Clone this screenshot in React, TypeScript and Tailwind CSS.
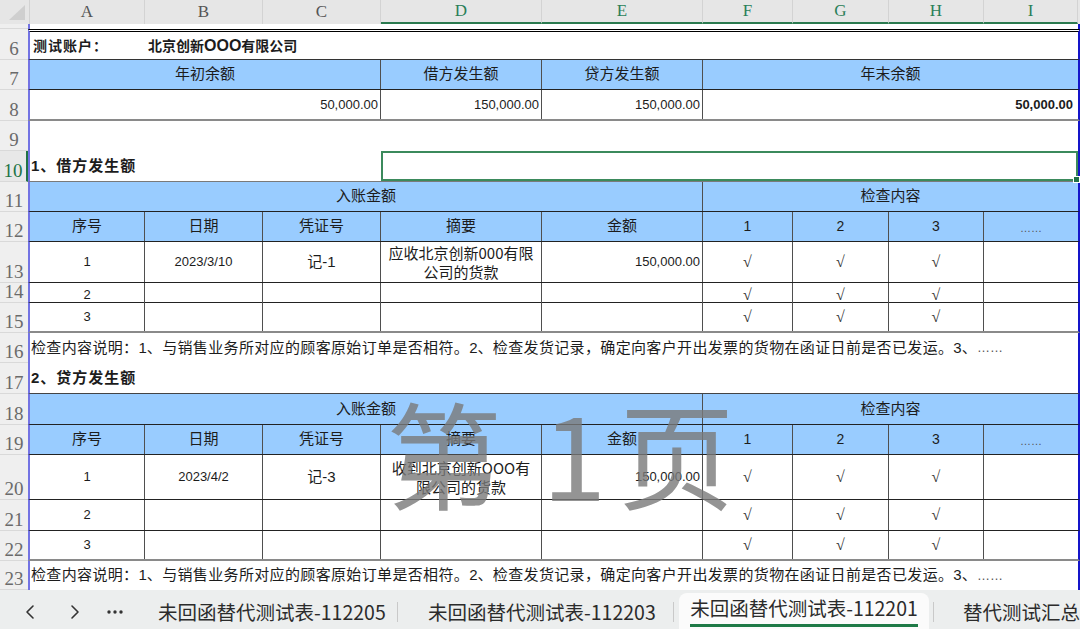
import React from "react";
import { ChevronLeft, ChevronRight } from "lucide-react";

const COLS = "grid grid-cols-[115px_118px_118px_161px_161px_90px_96px_95px_94px]";
const V = "border-r border-r-[#4f4f4f]";

type RowProps = { n: React.ReactNode; h: string; lab?: string; g?: string; children?: React.ReactNode };

function Row({ n, h, lab = "text-[#6a6a6a] bg-[#efefef]", g = "", children }: RowProps) {
  return (
    <div className={`flex ${h}`}>
      <div
        className={`w-[28px] shrink-0 flex items-end justify-center overflow-hidden border-b border-b-[#d9d9d9] font-['Liberation_Serif',serif] text-[19px] leading-[18px] pb-[1px] ${lab}`}
      >
        {n}
      </div>
      <div className={`w-[1052px] shrink-0 ${COLS} border-l-2 border-l-[#7373e3] border-r-2 border-r-[#1515c9] ${g}`}>
        {children}
      </div>
    </div>
  );
}

function C({ s = "", className = "", children }: { s?: string; className?: string; children?: React.ReactNode }) {
  return <div className={`flex items-center justify-center min-w-0 ${s} ${className}`}>{children}</div>;
}

const Num = ({ children, bold = false }: { children: React.ReactNode; bold?: boolean }) => (
  <span className={`font-['Liberation_Sans',sans-serif] text-[13px] ${bold ? "font-bold" : ""}`}>{children}</span>
);

const Chk = () => <span className="font-['Liberation_Serif',serif] text-[16px] text-[#333]">√</span>;

function Desc() {
  return (
    <C s="col-span-9" className="justify-start pl-[1px] whitespace-nowrap text-[15px] tracking-[0.35px]">
      检查内容说明：<span className="font-['Liberation_Sans',sans-serif] tracking-normal">1</span>、与销售业务所对应的顾客原始订单是否相符。
      <span className="font-['Liberation_Sans',sans-serif] tracking-normal">2</span>
      、检查发货记录，确定向客户开出发票的货物在函证日前是否已发运。
      <span className="font-['Liberation_Sans',sans-serif] tracking-normal">3</span>、
      <span className="font-['Liberation_Sans',sans-serif] text-[13px] tracking-normal text-[#555]">……</span>
    </C>
  );
}

export default function App() {
  const heads: [string, string, boolean][] = [
    ["A", "w-[115px]", false],
    ["B", "w-[118px]", false],
    ["C", "w-[118px]", false],
    ["D", "w-[161px]", true],
    ["E", "w-[161px]", true],
    ["F", "w-[90px]", true],
    ["G", "w-[96px]", true],
    ["H", "w-[95px]", true],
    ["I", "w-[94px]", true],
  ];

  const blue = "bg-[#99ccff]";

  return (
    <div className="relative w-[1080px] h-[629px] overflow-hidden bg-white text-[#1c1c1c] font-['Liberation_Sans','Noto_Sans_CJK_SC',sans-serif] text-[15px]">
      {/* column header */}
      <div className="flex h-[24px] bg-[#e6e6e6] font-['Liberation_Serif',serif] text-[17px]">
        <div className="w-[30px] shrink-0 border-r border-r-[#d2d2d2] flex items-start">
          <svg width="28" height="24" viewBox="0 0 28 24">
            <polygon points="25,5 25,20 9,20" fill="#cfcfcf" />
          </svg>
        </div>
        {heads.map(([l, w, sel]) => (
          <div
            key={l}
            className={`${w} shrink-0 flex items-center justify-center border-r border-r-[#d3d3d3] ${
              sel ? "text-[#2a7f58] border-b-2 border-b-[#2b7a4f]" : "text-[#555]"
            }`}
          >
            {l}
          </div>
        ))}
        <div className="flex-1" />
      </div>

      {/* row 5 (partial) */}
      <Row n="5" h="h-[5px]" />

      {/* row 6 */}
      <Row n="6" h="h-[31px]" g="border-t-[3px] border-t-black border-double border-b border-b-[#333]">
        <C className="justify-start pl-[3px] font-bold text-[14px] tracking-[1px] font-['Noto_Sans_CJK_SC',sans-serif]">测试账户：</C>
        <C s="col-span-3" className="justify-start pl-[3px] font-bold text-[14px] font-['Noto_Sans_CJK_SC',sans-serif] whitespace-nowrap">
          北京创新<span className="text-[16px] font-['Liberation_Sans',sans-serif]">OOO</span>有限公司
        </C>
        <C s="col-span-5" />
      </Row>

      {/* row 7 */}
      <Row n="7" h="h-[30px]" g={`${blue} border-b border-b-[#222]`}>
        <C s="col-span-3" className={V}>年初余额</C>
        <C className={V}>借方发生额</C>
        <C className={V}>贷方发生额</C>
        <C s="col-span-4">年末余额</C>
      </Row>

      {/* row 8 */}
      <Row n="8" h="h-[31px]" g="border-b-2 border-b-[#8a8a8a]">
        <C s="col-span-3" className={`${V} justify-end pr-[2px]`}>
          <Num>50,000.00</Num>
        </C>
        <C className={`${V} justify-end pr-[2px]`}>
          <Num>150,000.00</Num>
        </C>
        <C className={`${V} justify-end pr-[2px]`}>
          <Num>150,000.00</Num>
        </C>
        <C s="col-span-4" className="justify-end pr-[5px]">
          <Num bold>50,000.00</Num>
        </C>
      </Row>

      {/* row 9 */}
      <Row n="9" h="h-[30px]" />

      {/* row 10 */}
      <Row
        n="10"
        h="h-[31px]"
        lab="text-[#217346] bg-[#e8e8e8] border-r-2 border-r-[#217346]"
        g="border-b border-b-[#7a7a7a]"
      >
        <C s="col-span-3" className="justify-start pl-[1px] font-bold text-[15px] whitespace-nowrap tracking-[1px]">
          1、借方发生额
        </C>
        <div className="col-span-6 relative border-2 border-[#3b8a5c]">
          <div className="absolute -right-[4px] -bottom-[4px] w-[7px] h-[7px] bg-[#217346] border border-white" />
        </div>
      </Row>

      <Detail
        nums={["11", "12", "13", "14", "15"]}
        hs={["h-[30px]", "h-[30px]", "h-[41px]", "h-[20px]", "h-[30px]"]}
        date="2023/3/10"
        vno="记-1"
        memo={
          <>
            应收北京创新<span className="font-['Noto_Sans_CJK_SC',sans-serif]">000</span>有限
            <br />
            公司的货款
          </>
        }
      />

      {/* row 16 */}
      <Row n="16" h="h-[30px]">
        <Desc />
      </Row>

      {/* row 17 */}
      <Row n="17" h="h-[31px]" g="border-b border-b-[#444]">
        <C s="col-span-3" className="justify-start pl-[1px] font-bold text-[15px] whitespace-nowrap tracking-[1px]">
          2、贷方发生额
        </C>
      </Row>

      <Detail
        nums={["18", "19", "20", "21", "22"]}
        hs={["h-[31px]", "h-[30px]", "h-[45px]", "h-[31px]", "h-[30px]"]}
        date="2023/4/2"
        vno="记-3"
        memo={
          <>
            收到北京创新<span className="font-['Noto_Sans_CJK_SC',sans-serif]">OOO</span>有
            <br />
            限公司的货款
          </>
        }
      />

      {/* row 23 */}
      <Row n="23" h="h-[29px]">
        <Desc />
      </Row>

      {/* tab bar */}
      <div className="flex h-[39px] bg-[#eceeee] text-[19.5px] text-[#2b2b2b] font-['Noto_Sans_CJK_SC',sans-serif]">
        <div className="w-[60px] flex items-center justify-center pt-[4px] text-[#333]">
          <ChevronLeft size={24} strokeWidth={1.6} />
        </div>
        <div className="w-[30px] flex items-center justify-center pt-[4px] text-[#333]">
          <ChevronRight size={24} strokeWidth={1.6} />
        </div>
        <div className="w-[50px] flex items-center justify-center pt-[4px]">
          <svg width="16" height="4" viewBox="0 0 16 4">
            <circle cx="2" cy="2" r="1.7" fill="#333" />
            <circle cx="8" cy="2" r="1.7" fill="#333" />
            <circle cx="14" cy="2" r="1.7" fill="#333" />
          </svg>
        </div>
        <div className="w-[257px] flex items-center pl-[18px] pt-[4px] whitespace-nowrap">未回函替代测试表-112205</div>
        <div className="w-px h-[20px] self-center mt-[4px] bg-[#c9c9c9]" />
        <div className="w-[275px] flex items-center pl-[30px] pt-[4px] whitespace-nowrap">未回函替代测试表-112203</div>
        <div className="w-px h-[20px] self-center mt-[4px] bg-[#c9c9c9]" />
        <div className="ml-[5px] w-[250px] mt-[3px] rounded-t-[8px] bg-[#fbfbfb] flex flex-col items-center justify-end">
          <div className="whitespace-nowrap leading-[24px]">未回函替代测试表-112201</div>
          <div className="mt-[4px] mb-[2px] h-[3px] w-[228px] bg-[#1f7a47]" />
        </div>
        <div className="ml-[4px] w-px h-[20px] self-center mt-[4px] bg-[#c9c9c9]" />
        <div className="flex items-center pl-[29px] pt-[4px] whitespace-nowrap">替代测试汇总</div>
      </div>

      {/* watermark */}
      <div className="absolute left-[386px] top-[392px] flex items-center text-[116px] leading-none text-[#7a7a7a] opacity-80 font-['Noto_Sans_CJK_SC',sans-serif] pointer-events-none select-none">
        <span>第</span>
        <span className="ml-[40px]">1</span>
        <span className="ml-[12px]">页</span>
      </div>
    </div>
  );
}

function Detail({
  nums,
  hs,
  date,
  vno,
  memo,
}: {
  nums: string[];
  hs: string[];
  date: string;
  vno: string;
  memo: React.ReactNode;
}) {
  const blue = "bg-[#99ccff]";
  const rows = [
    { n: nums[2], h: hs[2], seq: "1", first: true, g: "border-b border-b-[#222]" },
    { n: nums[3], h: hs[3], seq: "2", first: false, g: "border-b border-b-[#222]" },
    { n: nums[4], h: hs[4], seq: "3", first: false, g: "border-b-2 border-b-[#8a8a8a]" },
  ];
  return (
    <>
      <Row n={nums[0]} h={hs[0]} g={`${blue} border-b border-b-[#222]`}>
        <C s="col-span-5" className={V}>入账金额</C>
        <C s="col-span-4">检查内容</C>
      </Row>
      <Row n={nums[1]} h={hs[1]} g={`${blue} border-b border-b-[#222]`}>
        <C className={V}>序号</C>
        <C className={V}>日期</C>
        <C className={V}>凭证号</C>
        <C className={V}>摘要</C>
        <C className={V}>金额</C>
        <C className={V}>
          <span className="font-['Liberation_Sans',sans-serif] text-[14px]">1</span>
        </C>
        <C className={V}>
          <span className="font-['Liberation_Sans',sans-serif] text-[14px]">2</span>
        </C>
        <C className={V}>
          <span className="font-['Liberation_Sans',sans-serif] text-[14px]">3</span>
        </C>
        <C>
          <span className="font-['Liberation_Sans',sans-serif] text-[11px] text-[#555] pt-[4px]">……</span>
        </C>
      </Row>
      {rows.map((r) => (
        <Row key={r.n} n={r.n} h={r.h} g={r.g}>
          <C className={V}>
            <Num>{r.seq}</Num>
          </C>
          <C className={V}>{r.first ? <Num>{date}</Num> : null}</C>
          <C className={V}>{r.first ? vno : null}</C>
          <C className={`${V} text-center leading-[19px]`}>{r.first ? <div>{memo}</div> : null}</C>
          <C className={`${V} justify-end pr-[2px]`}>{r.first ? <Num>150,000.00</Num> : null}</C>
          <C className={V}>
            <Chk />
          </C>
          <C className={V}>
            <Chk />
          </C>
          <C className={V}>
            <Chk />
          </C>
          <C />
        </Row>
      ))}
    </>
  );
}
